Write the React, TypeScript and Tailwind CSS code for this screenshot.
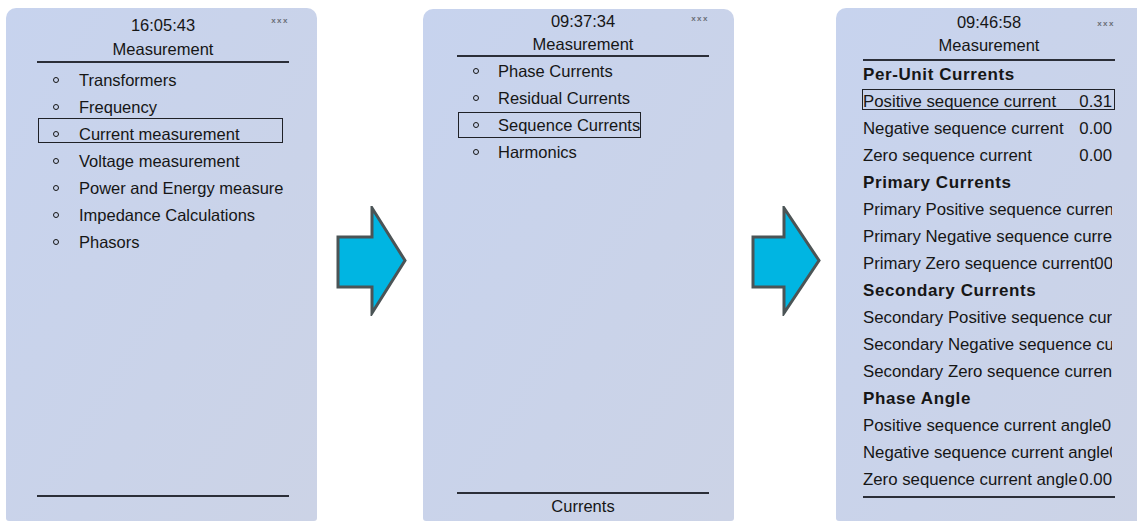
import React from "react";

const FONT = "font-['Liberation_Sans',Arial,sans-serif]";

function Arrow({ head, tip }: { head: number; tip: number }) {
  const pts = `2,31 ${head},31 ${head},2 ${tip},54.5 ${head},107 ${head},81 2,81`;
  return (
    <svg width="72" height="110" viewBox="0 0 72 110" className="block">
      <polygon points={pts} fill="#00b5e2" stroke="#4b5456" strokeWidth="3" strokeLinejoin="miter" />
    </svg>
  );
}

function Xxx({ className }: { className: string }) {
  return (
    <span className={`absolute right-0 text-[8px] leading-none font-bold tracking-[1.5px] text-[#6b6f78] ${className}`}>
      xxx
    </span>
  );
}

const panelBg = "bg-linear-to-br from-[#c7d3ee] to-[#ccd3e6]";

function ListRow({
  text,
  bulletMl,
  textMl,
  selected,
  box,
}: {
  text: string;
  bulletMl: string;
  textMl: string;
  selected?: boolean;
  box?: string;
}) {
  return (
    <div className="relative flex h-[27px] items-center whitespace-nowrap">
      <span className={`${bulletMl} mb-[2px] block h-[6px] w-[6px] shrink-0 rounded-full border-[1.5px] border-[#151515]`} />
      <span className={`${textMl} leading-[27px]`}>{text}</span>
      {selected && <span className={`absolute border-[1.5px] border-[#1f2127] ${box}`} />}
    </div>
  );
}

type R = { h?: string; l?: string; v?: string; sel?: boolean };

const rows3: R[] = [
  { h: "Per-Unit Currents" },
  { l: "Positive sequence current", v: "0.31", sel: true },
  { l: "Negative sequence current", v: "0.00" },
  { l: "Zero sequence current", v: "0.00" },
  { h: "Primary Currents" },
  { l: "Primary Positive sequence current", v: "0.00" },
  { l: "Primary Negative sequence current", v: "0.00" },
  { l: "Primary Zero sequence current", v: "00" },
  { h: "Secondary Currents" },
  { l: "Secondary Positive sequence current", v: "0.00" },
  { l: "Secondary Negative sequence current", v: "0.00" },
  { l: "Secondary Zero sequence current", v: "0.00" },
  { h: "Phase Angle" },
  { l: "Positive sequence current angle", v: "0.00" },
  { l: "Negative sequence current angle", v: "0.00" },
  { l: "Zero sequence current angle", v: "0.00" },
];

export default function App() {
  const list1 = [
    "Transformers",
    "Frequency",
    "Current measurement",
    "Voltage measurement",
    "Power and Energy measure",
    "Impedance Calculations",
    "Phasors",
  ];
  const list2 = ["Phase Currents", "Residual Currents", "Sequence Currents", "Harmonics"];

  return (
    <div className={`flex h-[521px] w-[1137px] items-start overflow-hidden bg-white text-[#161616] ${FONT}`}>
      {/* Panel 1 */}
      <div className={`ml-[6px] mt-[8px] flex h-[513px] w-[311px] shrink-0 flex-col rounded-t-[10px] rounded-b-[3px] pt-[5px] pb-[24px] text-[16.5px] ${panelBg}`}>
        <div className="relative ml-[31px] mr-[28px] text-center leading-[24px]">
          <div>16:05:43</div>
          <div>Measurement</div>
          <Xxx className="top-[4px]" />
        </div>
        <div className="ml-[31px] mr-[28px] h-[2px] bg-[#2b2e38]" />
        <div className="mt-[4px]">
          {list1.map((t, i) => (
            <ListRow
              key={t}
              text={t}
              bulletMl="ml-[47px]"
              textMl="ml-[20px]"
              selected={i === 2}
              box="left-[32px] top-[-3px] h-[25px] w-[245px]"
            />
          ))}
        </div>
        <div className="flex-1" />
        <div className="ml-[31px] mr-[28px] h-[2px] bg-[#2b2e38]" />
      </div>

      {/* Arrow 1 */}
      <div className="w-[106px] shrink-0 pl-[19px] pt-[206px]">
        <Arrow head={36} tip={69} />
      </div>

      {/* Panel 2 */}
      <div className={`mt-[9px] flex h-[512px] w-[311px] shrink-0 flex-col rounded-t-[10px] rounded-b-[3px] pb-[3px] text-[16.5px] ${panelBg}`}>
        <div className="relative ml-[34px] mr-[25px] text-center">
          <div className="leading-[24px]">09:37:34</div>
          <div className="leading-[22px]">Measurement</div>
          <Xxx className="top-[6px]" />
        </div>
        <div className="ml-[34px] mr-[25px] h-[2px] bg-[#2b2e38]" />
        <div className="mt-[1px]">
          {list2.map((t, i) => (
            <ListRow
              key={t}
              text={t}
              bulletMl="ml-[50px]"
              textMl="ml-[19px]"
              selected={i === 2}
              box="left-[35px] top-0 h-[26px] w-[183px]"
            />
          ))}
        </div>
        <div className="flex-1" />
        <div className="ml-[34px] mr-[25px] h-[2px] bg-[#2b2e38]" />
        <div className="ml-[34px] mr-[25px] text-center leading-[24px]">Currents</div>
      </div>

      {/* Arrow 2 */}
      <div className="w-[102px] shrink-0 pl-[17px] pt-[206px]">
        <Arrow head={33} tip={68} />
      </div>

      {/* Panel 3 */}
      <div className={`mt-[8px] flex h-[513px] w-[311px] shrink-0 flex-col rounded-t-[10px] rounded-b-[3px] pt-[1.5px] pb-[23px] ${panelBg}`}>
        <div className="relative ml-[27px] mr-[32px] text-center text-[16.5px]">
          <div className="leading-[24px]">09:46:58</div>
          <div className="leading-[22px]">Measurement</div>
          <Xxx className="top-[10px]" />
        </div>
        <div className="ml-[27px] mr-[32px] mt-[3px] h-[2px] bg-[#2b2e38]" />
        <div>
          {rows3.map((r, i) =>
            r.h ? (
              <div key={i} className="ml-[27px] h-[27px] whitespace-nowrap text-[17px] font-bold leading-[27px] tracking-[0.6px]">
                {r.h}
              </div>
            ) : (
              <div key={i} className="relative h-[27px]">
                <div className="ml-[27px] flex h-[27px] w-[249px] overflow-hidden whitespace-nowrap text-[16.8px] leading-[27px]">
                  <span className="shrink-0">{r.l}</span>
                  <span className="ml-auto shrink-0">{r.v}</span>
                </div>
                {r.sel && (
                  <span className="absolute left-[26px] top-[1.5px] h-[21px] w-[253px] border-[1.5px] border-[#1f2127]" />
                )}
              </div>
            )
          )}
        </div>
        <div className="flex-1" />
        <div className="ml-[27px] mr-[32px] h-[2px] bg-[#2b2e38]" />
      </div>
    </div>
  );
}
